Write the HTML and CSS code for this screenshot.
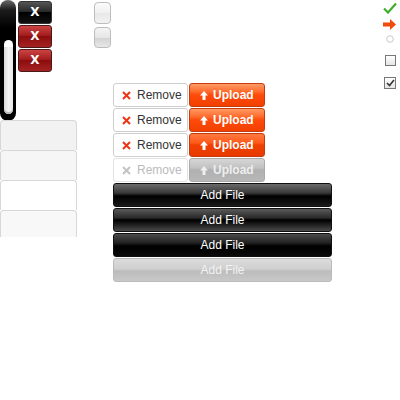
FILE: index.html
```html
<!DOCTYPE html>
<html lang="en">
<head>
    <meta charset="UTF-8">
    <meta name="viewport" content="width=device-width, initial-scale=1.0">
    <title>Upload Sprite</title>
    <link rel="stylesheet" href="styles.css">
</head>
<body>
    <div class="sheet">
        <div class="scrollbar">
            <div class="scroll-track"></div>
        </div>

        <div class="x-buttons">
            <span class="x-btn dark">X</span>
            <span class="x-btn red">X</span>
            <span class="x-btn red">X</span>
        </div>

        <div class="rows">
            <div class="row"></div>
            <div class="row"></div>
            <div class="row white"></div>
            <div class="row"></div>
        </div>

        <div class="small-buttons">
            <span class="small-btn"></span>
            <span class="small-btn pressed"></span>
        </div>

        <div class="actions">
            <div class="pair">
                <button class="remove"><svg class="cross" viewBox="0 0 9 9"><path d="M1 1 L8 8 M8 1 L1 8"/></svg>Remove</button>
                <button class="upload"><svg class="arrow" viewBox="0 0 8 9"><path d="M4 0 L8 4.5 H5.5 V9 H2.5 V4.5 H0 Z"/></svg>Upload</button>
            </div>
            <div class="pair">
                <button class="remove"><svg class="cross" viewBox="0 0 9 9"><path d="M1 1 L8 8 M8 1 L1 8"/></svg>Remove</button>
                <button class="upload"><svg class="arrow" viewBox="0 0 8 9"><path d="M4 0 L8 4.5 H5.5 V9 H2.5 V4.5 H0 Z"/></svg>Upload</button>
            </div>
            <div class="pair">
                <button class="remove"><svg class="cross" viewBox="0 0 9 9"><path d="M1 1 L8 8 M8 1 L1 8"/></svg>Remove</button>
                <button class="upload pressed"><svg class="arrow" viewBox="0 0 8 9"><path d="M4 0 L8 4.5 H5.5 V9 H2.5 V4.5 H0 Z"/></svg>Upload</button>
            </div>
            <div class="pair disabled">
                <button class="remove"><svg class="cross" viewBox="0 0 9 9"><path d="M1 1 L8 8 M8 1 L1 8"/></svg>Remove</button>
                <button class="upload"><svg class="arrow" viewBox="0 0 8 9"><path d="M4 0 L8 4.5 H5.5 V9 H2.5 V4.5 H0 Z"/></svg>Upload</button>
            </div>

            <button class="add">Add File</button>
            <button class="add hover">Add File</button>
            <button class="add pressed">Add File</button>
            <button class="add disabled">Add File</button>
        </div>

        <div class="status">
            <svg width="14" height="12" viewBox="0 0 14 12"><path d="M1 6.5 L5 10.5 L13 1.5" fill="none" stroke="#3fae2a" stroke-width="2.2"/></svg>
            <svg width="14" height="11" viewBox="0 0 14 11"><path d="M0 3.5 H7 V0 L13 5.5 L7 11 V7.5 H0 Z" fill="#f04a0c"/></svg>
            <svg width="8" height="8" viewBox="0 0 8 8"><circle cx="4" cy="4" r="3.3" fill="#fff" stroke="#c8c8c8" stroke-width="1"/></svg>
            <span class="box"></span>
            <span class="box checked">
                <svg width="9" height="8" viewBox="0 0 9 8"><path d="M1 4 L3.5 6.5 L8 1" fill="none" stroke="#333" stroke-width="1.6"/></svg>
            </span>
        </div>
    </div>
</body>
</html>
```

FILE: styles.css
```css
body {
    margin: 0;
    background: #fff;
    font-family: "Liberation Sans", Arial, sans-serif;
}

.sheet {
    position: relative;
    width: 400px;
    height: 400px;
}

/* sprite pieces sit on the sheet at their own spots */
.scrollbar {
    position: absolute;
    left: 0;
    top: 0;
    width: 16px;
    height: 121px;
    box-sizing: border-box;
    border-radius: 8px;
    background: linear-gradient(#6a6a6a, #1c1c1c 10px, #000 28px, #000);
    padding: 40px 3px 7px 4px;
}

.scroll-track {
    height: 100%;
    border-radius: 5px;
    background: linear-gradient(90deg, #d8d8d8, #f4f4f4 50%, #e6e6e6);
    border-top: 7px solid #fff;
    box-sizing: border-box;
    box-shadow: inset 0 -2px 0 #bbb;
}

.x-buttons {
    position: absolute;
    left: 18px;
    top: 1px;
    display: flex;
    flex-direction: column;
    gap: 1px;
}

.x-btn {
    width: 34px;
    height: 23px;
    box-sizing: border-box;
    border-radius: 3px;
    border: 1px solid #333;
    color: #fff;
    font: bold 12px "DejaVu Sans", sans-serif;
    display: flex;
    align-items: center;
    justify-content: center;
    padding-bottom: 1px;
}

.x-btn.dark {
    background: linear-gradient(#555, #2a2a2a 45%, #000 50%, #111);
}

.x-btn.red {
    background: linear-gradient(#c44, #a31d1d 45%, #8c0d0d 50%, #a52222);
    border-color: #4a1a1a;
}

.rows {
    position: absolute;
    left: 0;
    top: 120px;
    width: 77px;
    display: flex;
    flex-direction: column;
}

.row {
    height: 30px;
    box-sizing: border-box;
    border: 1px solid #d7d7d7;
    border-bottom: none;
    border-radius: 4px 4px 0 0;
    background: #f6f6f6;
}

.row:first-child {
    background: #f2f2f2;
}

.row.white {
    background: #fff;
}

.row:last-child {
    height: 27px;
    background: #f8f8f8;
}

.small-buttons {
    position: absolute;
    left: 94px;
    top: 2px;
    display: flex;
    flex-direction: column;
    gap: 3px;
}

.small-btn {
    width: 17px;
    height: 22px;
    box-sizing: border-box;
    border: 1px solid #bdbdbd;
    border-radius: 4px;
    background: linear-gradient(#fbfbfb, #f0f0f0 50%, #e8e8e8 52%, #f2f2f2);
}

.small-btn.pressed {
    height: 21px;
    background: linear-gradient(#f4f4f4, #e6e6e6 50%, #d2d2d2 52%, #e8e8e8);
}

.actions {
    position: absolute;
    left: 113px;
    top: 83px;
    width: 220px;
    display: flex;
    flex-direction: column;
    gap: 1px;
}

.pair {
    display: flex;
    gap: 1px;
}

button {
    font-family: "Liberation Sans", Arial, sans-serif;
    cursor: pointer;
    margin: 0;
}

.remove {
    width: 75px;
    height: 24px;
    border: 1px solid #cfcfcf;
    border-radius: 3px;
    background: #fff;
    color: #333;
    font-size: 12px;
    padding: 0 0 0 8px;
    display: flex;
    align-items: center;
}

.cross {
    width: 9px;
    height: 9px;
    margin-right: 6px;
    fill: none;
    stroke: #ee3517;
    stroke-width: 2;
}

.upload {
    width: 76px;
    height: 24px;
    border: 1px solid #c63a10;
    border-radius: 3px;
    background: linear-gradient(#ff9a66, #ff6b2c 35%, #ff4a0b 50%, #f04000);
    color: #fff;
    font-size: 12px;
    font-weight: bold;
    padding: 0 0 0 10px;
    display: flex;
    align-items: center;
}

.upload.pressed {
    background: linear-gradient(#ff7a40, #ff5a1a 40%, #f04000 50%, #e83a00);
}

.arrow {
    width: 8px;
    height: 9px;
    margin-right: 5px;
    fill: #fff;
}

.pair.disabled .remove {
    color: #bbb;
    border-color: #e2e2e2;
}

.pair.disabled .cross {
    stroke: #c4c4c4;
}

.pair.disabled .upload {
    border-color: #aaa;
    background: linear-gradient(#d6d6d6, #c2c2c2 40%, #b0b0b0 50%, #b8b8b8);
    color: #eee;
}

.pair.disabled .arrow {
    fill: #eee;
}

.add {
    width: 219px;
    height: 24px;
    border: 1px solid #111;
    border-radius: 3px;
    background: linear-gradient(#6a6a6a, #3a3a3a 40%, #000 55%, #1a1a1a);
    color: #fff;
    font-size: 12px;
    padding: 0;
}

.add.hover {
    background: linear-gradient(#5a5a5a, #2a2a2a 40%, #000 50%, #4a4a4a);
}

.add.pressed {
    background: linear-gradient(#4a4a4a, #222 40%, #000 55%, #0a0a0a);
}

.add.disabled {
    border-color: #bbb;
    background: linear-gradient(#dcdcdc, #cfcfcf 45%, #bcbcbc 55%, #c8c8c8);
    color: #f2f2f2;
}

.status {
    position: absolute;
    left: 383px;
    top: 2px;
    width: 14px;
    display: flex;
    flex-direction: column;
    align-items: center;
    gap: 5px;
}

.box {
    width: 11px;
    height: 11px;
    box-sizing: border-box;
    border: 1px solid #777;
    background: linear-gradient(#fff, #e4e4e4);
    margin-top: 7px;
    display: flex;
    align-items: center;
    justify-content: center;
}

.box.checked {
    width: 12px;
    height: 12px;
    margin-top: 6px;
}
```
